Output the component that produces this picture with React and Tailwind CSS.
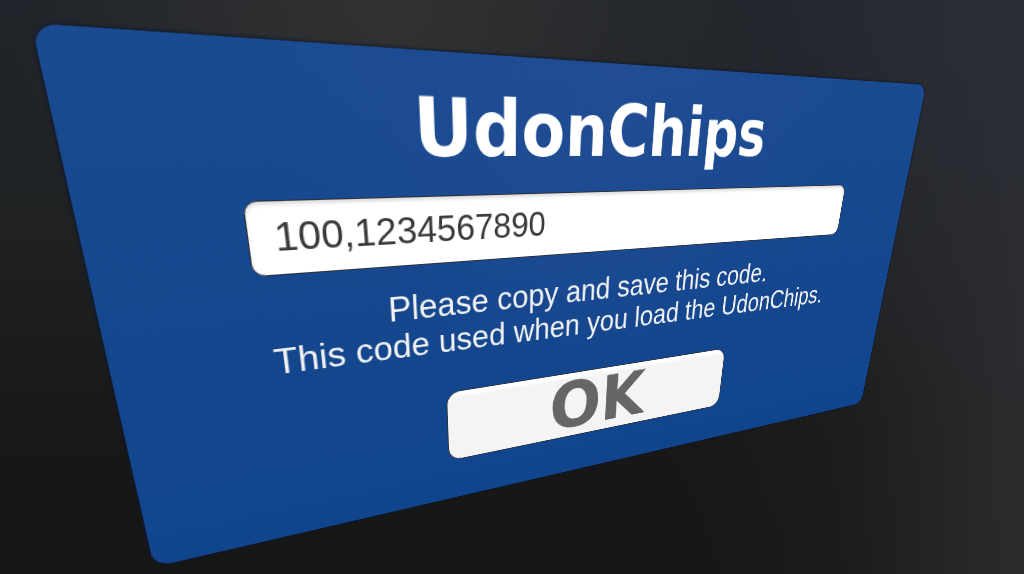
import React, { useLayoutEffect, useState } from "react";

// Panel size in its own flat coordinates
const PANEL_WIDTH = 1012;
const PANEL_HEIGHT = 484;

// Where the panel's corners land, as fractions of the window
// (top left, top right, bottom right, bottom left)
const CORNERS = [
  [0.0303, 0.0401],
  [0.9043, 0.1481],
  [0.8408, 0.7021],
  [0.1504, 0.9878],
];

// --- Perspective: map the flat panel onto the four corners ---
const getPanelTransform = (width, height) => {
  const [[x0, y0], [x1, y1], [x2, y2], [x3, y3]] = CORNERS.map(([x, y]) => [
    x * width,
    y * height,
  ]);

  const dx1 = x1 - x2;
  const dx2 = x3 - x2;
  const sx = x0 - x1 + x2 - x3;
  const dy1 = y1 - y2;
  const dy2 = y3 - y2;
  const sy = y0 - y1 + y2 - y3;
  const det = dx1 * dy2 - dx2 * dy1;

  const g = (sx * dy2 - dx2 * sy) / det;
  const h = (dx1 * sy - sx * dy1) / det;

  const w = PANEL_WIDTH;
  const t = PANEL_HEIGHT;
  const matrix = [
    (x1 - x0 + g * x1) / w, (y1 - y0 + g * y1) / w, 0, g / w,
    (x3 - x0 + h * x3) / t, (y3 - y0 + h * y3) / t, 0, h / t,
    0, 0, 1, 0,
    x0, y0, 0, 1,
  ];
  return `matrix3d(${matrix.map((n) => n.toFixed(8)).join(",")})`;
};

const useWindowSize = () => {
  const [size, setSize] = useState({
    width: window.innerWidth,
    height: window.innerHeight,
  });

  useLayoutEffect(() => {
    const handleResize = () =>
      setSize({ width: window.innerWidth, height: window.innerHeight });
    window.addEventListener("resize", handleResize);
    return () => window.removeEventListener("resize", handleResize);
  }, []);

  return size;
};

const SaveCodePanel = ({ code, onClose }) => {
  const { width, height } = useWindowSize();

  return (
    <section
      className="w-[1012px] origin-top-left rounded-2xl bg-[radial-gradient(ellipse_at_50%_0%,#214c93_0%,transparent_50%),linear-gradient(to_bottom,#1a4b91_0%,#15478e_50%,#10458d_100%)] px-[125px] pt-8 pb-[50px] flex flex-col items-center shadow-[0_0_3px_1px_rgba(10,22,48,0.8)]"
      style={{ transform: getPanelTransform(width, height) }}
    >
      <h1 className="font-['DejaVu_Sans',sans-serif] text-[74px] leading-[72px] font-bold text-white">
        UdonChips
      </h1>

      <input
        id="save-code"
        type="text"
        readOnly
        value={code}
        className="mt-7 w-full h-[69px] rounded-xl border border-[#2b2f38] bg-white px-[22px] pb-0.5 text-[37px] text-[#3a3a3a] outline-none shadow-[inset_0_3px_4px_-1px_rgba(0,0,0,0.18)]"
      />

      <label
        htmlFor="save-code"
        className="mt-6 text-center text-[36px] leading-[41px] text-[#f2f2f2] whitespace-nowrap"
      >
        Please copy and save this code.
        <br />
        This code used when you load the UdonChips.
      </label>

      <button
        type="button"
        onClick={onClose}
        className="mt-10 w-[400px] h-[87px] rounded-2xl border border-[#2b2f38] bg-[#f4f4f4] font-['DejaVu_Sans',sans-serif] text-[86px] leading-[84px] font-bold text-[#666666] flex items-center justify-center shadow-[inset_0_8px_3px_-2px_#ffffff]"
      >
        OK
      </button>
    </section>
  );
};

const App = () => {
  const [isOpen, setIsOpen] = useState(true);

  return (
    <main className="h-screen w-full overflow-hidden bg-[radial-gradient(ellipse_at_38%_0%,#323232_0%,transparent_42%),radial-gradient(circle_at_100%_0%,#2a2d37_0%,transparent_35%),linear-gradient(to_left,#2b2c2e_0%,#20212180_18%,transparent_34%),linear-gradient(to_bottom,#20242a_0%,#1f2122_40%,#181818_75%,#161615_100%)] font-['Liberation_Sans',Arial,sans-serif]">
      {isOpen && (
        <SaveCodePanel
          code="100,1234567890"
          onClose={() => setIsOpen(false)}
        />
      )}
    </main>
  );
};

export default App;
